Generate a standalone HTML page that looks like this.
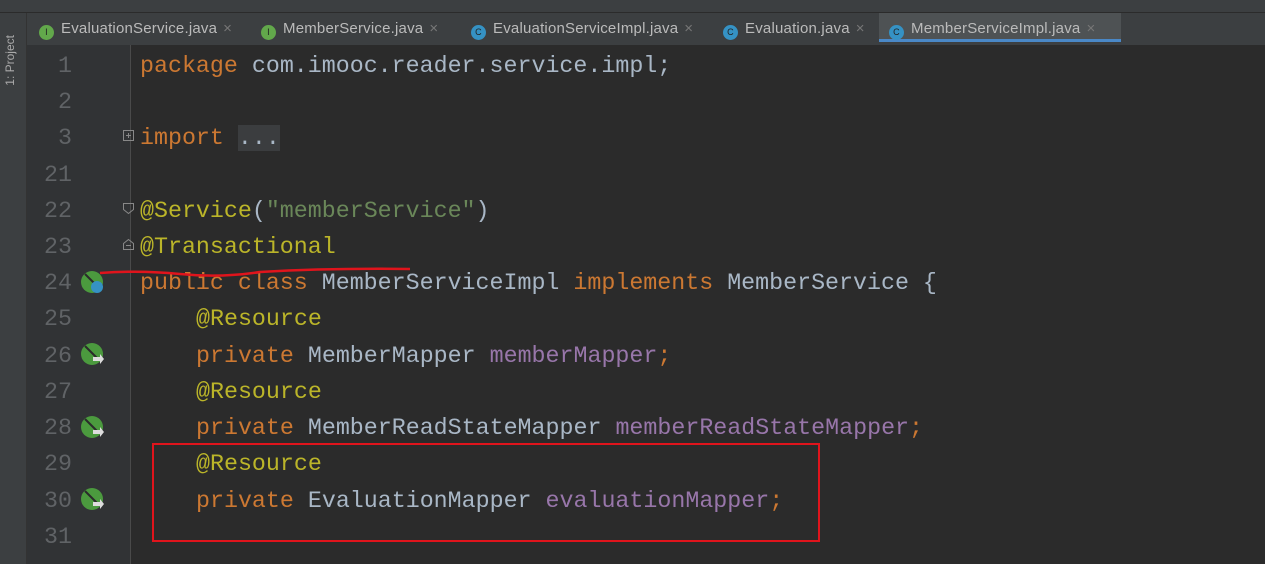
<!DOCTYPE html>
<html><head><meta charset="utf-8"><style>
body{margin:0;width:1265px;height:564px;overflow:hidden;background:#2b2b2b;position:relative;font-family:"Liberation Sans",sans-serif}
.top{position:absolute;left:0;top:0;width:1265px;height:12px;background:#3c3f41;border-bottom:1px solid #2b2b2b}
.side{position:absolute;left:0;top:13px;width:26px;height:551px;background:#3c3f41;border-right:1px solid #333}
.side .lbl{position:absolute;left:3px;top:22px;writing-mode:vertical-rl;transform:rotate(180deg);color:#aaa;font-size:12px}
.tabs{position:absolute;left:27px;top:13px;width:1238px;height:32px;background:#3c3f41}
.tab{position:absolute;top:0;height:32px;line-height:32px;color:#bbb;font-size:15px;white-space:nowrap;letter-spacing:0.2px}
.tab i{display:inline-block;width:15px;height:15px;border-radius:50%;font-style:normal;font-size:9px;line-height:15px;text-align:center;color:#222;vertical-align:-2px;margin-right:7px}
.tab b{font-weight:normal;color:#777;margin-left:6px}
.gi{background:#62a84b}.ci{background:#3592c4}
.act{background:#4e5254;border-bottom:3px solid #4a88c7;height:29px}
.gut{position:absolute;left:27px;top:45px;width:103px;height:519px;background:#313335;border-right:1px solid #4a4a4a}
.code{position:absolute;left:0;top:48px;font-family:"Liberation Mono",monospace;font-size:23.3px;color:#a9b7c6}
.r{position:absolute;height:36px;line-height:36px;white-space:pre}
.n{position:absolute;width:72px;text-align:right;color:#606366;left:0}
.k{color:#cc7832}.a{color:#bbb529}.s{color:#6a8759}.f{color:#9876aa}
</style></head><body>
<div class="top"></div>
<div class="side"><div class="lbl">1: Project</div></div>
<div class="tabs">
<div class="tab" style="left:12px"><i class="gi">I</i>EvaluationService.java<b>×</b></div>
<div class="tab" style="left:234px"><i class="gi">I</i>MemberService.java<b>×</b></div>
<div class="tab" style="left:444px"><i class="ci">C</i>EvaluationServiceImpl.java<b>×</b></div>
<div class="tab" style="left:696px"><i class="ci">C</i>Evaluation.java<b>×</b></div>
<div class="tab act" style="left:852px;width:242px;padding-left:10px;box-sizing:border-box"><i class="ci">C</i>MemberServiceImpl.java<b>×</b></div>
</div>
<div class="gut"></div>
<div class="code">
<div class="r" style="top:0"><span class="n">1</span><span style="position:absolute;left:140px"><span class="k">package</span> com.imooc.reader.service.impl;</span></div>
<div class="r" style="top:36px"><span class="n">2</span></div>
<div class="r" style="top:72px"><span class="n">3</span><span style="position:absolute;left:140px"><span class="k">import</span> <span style="background:#3b3d3f">...</span></span></div>
<div class="r" style="top:109px"><span class="n">21</span></div>
<div class="r" style="top:145px"><span class="n">22</span><span style="position:absolute;left:140px"><span class="a">@Service</span>(<span class="s">"memberService"</span>)</span></div>
<div class="r" style="top:181px"><span class="n">23</span><span style="position:absolute;left:140px"><span class="a">@Transactional</span></span></div>
<div class="r" style="top:217px"><span class="n">24</span><span style="position:absolute;left:140px"><span class="k">public class</span> MemberServiceImpl <span class="k">implements</span> MemberService {</span></div>
<div class="r" style="top:253px"><span class="n">25</span><span style="position:absolute;left:196px"><span class="a">@Resource</span></span></div>
<div class="r" style="top:290px"><span class="n">26</span><span style="position:absolute;left:196px"><span class="k">private</span> MemberMapper <span class="f">memberMapper</span><span class="k">;</span></span></div>
<div class="r" style="top:326px"><span class="n">27</span><span style="position:absolute;left:196px"><span class="a">@Resource</span></span></div>
<div class="r" style="top:362px"><span class="n">28</span><span style="position:absolute;left:196px"><span class="k">private</span> MemberReadStateMapper <span class="f">memberReadStateMapper</span><span class="k">;</span></span></div>
<div class="r" style="top:398px"><span class="n">29</span><span style="position:absolute;left:196px"><span class="a">@Resource</span></span></div>
<div class="r" style="top:435px"><span class="n">30</span><span style="position:absolute;left:196px"><span class="k">private</span> EvaluationMapper <span class="f">evaluationMapper</span><span class="k">;</span></span></div>
<div class="r" style="top:471px"><span class="n">31</span></div>
</div>
<svg style="position:absolute;left:0;top:0" width="1265" height="564">
<defs><g id="bean"><circle cx="11" cy="11" r="11" fill="#4b9a3e"/><path d="M4 3L18 17" stroke="#2b2b2b" stroke-width="2"/></g>
<g id="arr"><path d="M12 14h7v-3l4 5-4 5v-3h-7z" fill="#ddd"/></g></defs>
<use href="#bean" x="81" y="271"/><circle cx="97" cy="287" r="6" fill="#3592c4"/>
<use href="#bean" x="81" y="343"/><use href="#arr" x="81" y="343"/>
<use href="#bean" x="81" y="416"/><use href="#arr" x="81" y="416"/>
<use href="#bean" x="81" y="488"/><use href="#arr" x="81" y="488"/>
<g fill="none" stroke="#888" stroke-width="1"><rect x="123.5" y="130.5" width="10" height="10"/><path d="M126 135.5h5M128.5 133v5"/>
<path d="M123.5 203.5h10v6l-5 4l-5-4z"/><path d="M123.5 249.5h10v-6l-5-4l-5 4z"/><path d="M126 245.5h5"/></g>
<path d="M100 273 Q140 270 180 274 T260 272 Q330 268 410 269" stroke="#e0141c" stroke-width="2.5" fill="none"/>
<rect x="153" y="444" width="666" height="97" stroke="#e0141c" stroke-width="2" fill="none"/>
</svg>
</body></html>
